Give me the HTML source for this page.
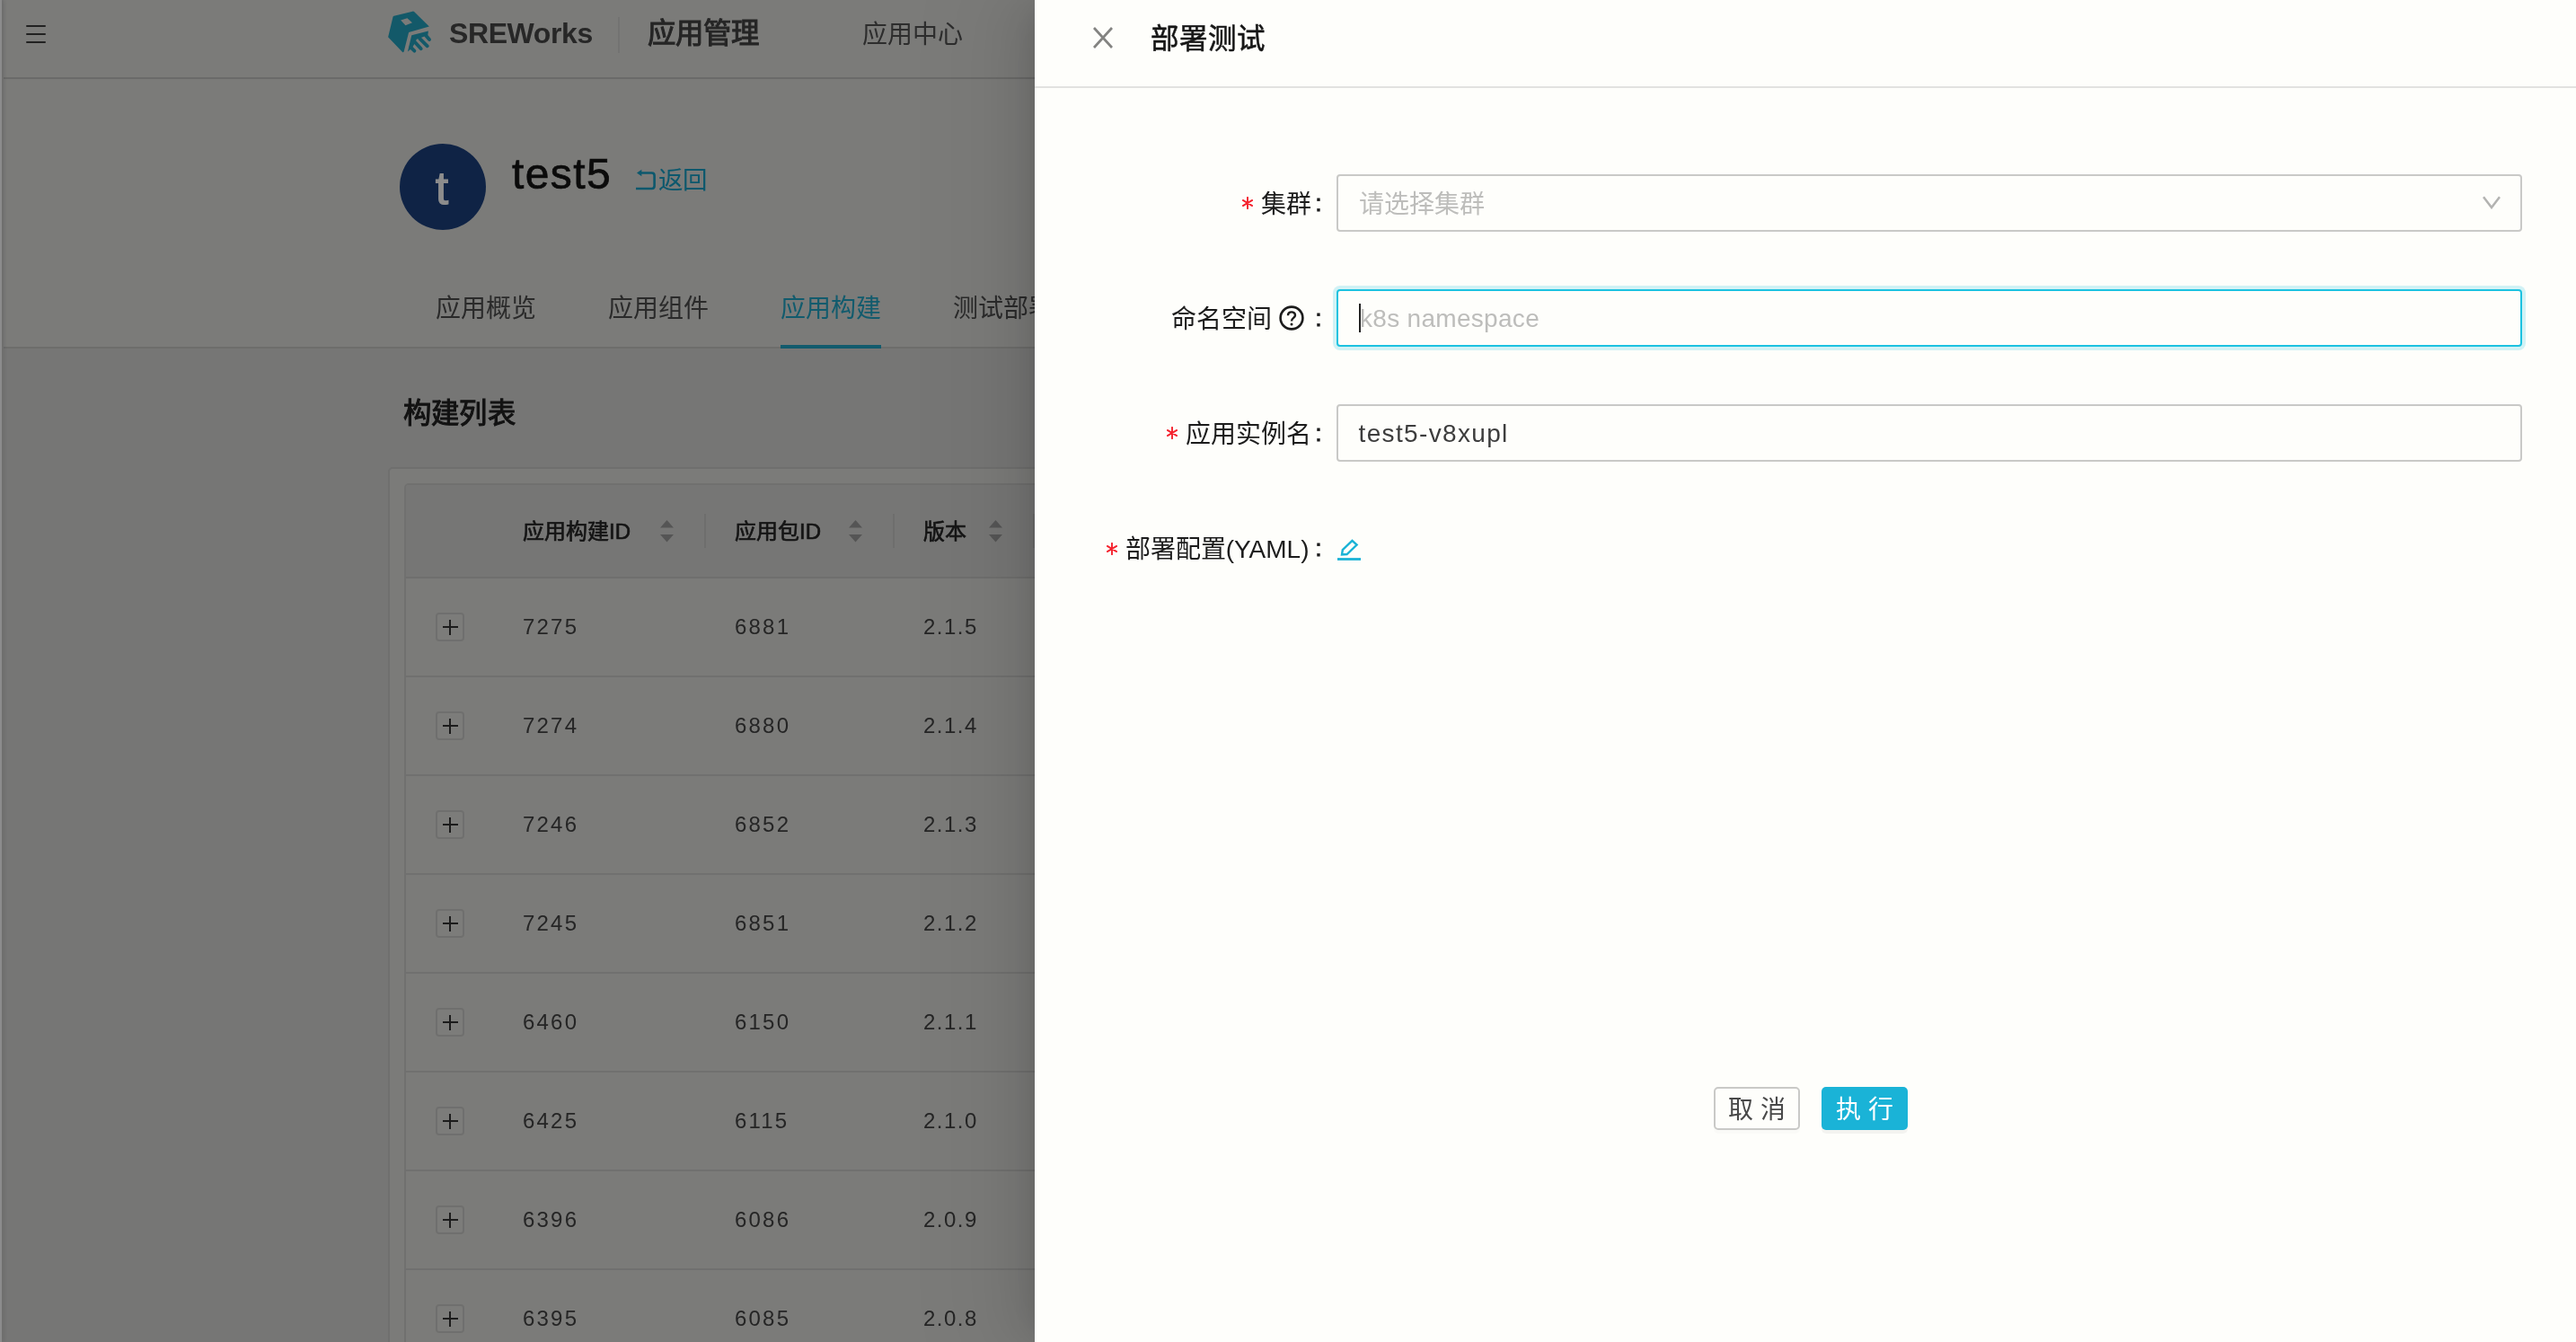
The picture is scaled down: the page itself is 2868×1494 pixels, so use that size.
<!DOCTYPE html>
<html lang="zh-CN">
<head>
<meta charset="utf-8">
<title>SREWorks</title>
<style>
html,body{margin:0;padding:0}
body{width:2868px;height:1494px;overflow:hidden;position:relative;background:#d9d9d7;font-family:"Liberation Sans",sans-serif;color:#222;}
div,span,svg{position:absolute;box-sizing:border-box;white-space:nowrap}
.t{line-height:1;}
/* ---------- underlying page ---------- */
#page{will-change:transform;left:0;top:0;width:2868px;height:1494px;background:#d7d7d6;overflow:hidden}
#strip{left:0;top:0;width:2px;height:1494px;background:#fff;box-shadow:2px 0 4px rgba(0,0,0,.18)}
#hdr{left:4px;top:0;width:2864px;height:88px;background:#e0e0dd;border-bottom:2px solid #c2c2c0;box-shadow:0 -2px 3px rgba(0,0,0,.0)}
#ttl{left:4px;top:88px;width:2864px;height:300px;background:#e0e0dd;border-bottom:2px solid #c6c6c4}
.ham{left:29px;width:22px;height:2.4px;background:#3c3c3c;border-radius:1px}
#brand{left:500px;top:21px;font-size:32px;font-weight:700;color:#484848;letter-spacing:-.4px}
#vdiv{left:688px;top:19px;width:2px;height:40px;background:#d2d2d0}
#appm{left:720.5px;top:21.5px;font-size:31.4px;letter-spacing:.3px;color:#444;-webkit-text-stroke:1.1px #444}
#appc{left:960px;top:25px;font-size:28px;color:#525252}
#ava{left:445px;top:160px;width:96px;height:96px;border-radius:50%;background:#1c417f}
#avat{left:444px;top:160px;width:96px;height:96px;text-align:center;font-size:52px;line-height:98px;color:#fff;-webkit-text-stroke:1.2px #fff}
#name{left:570px;top:170px;font-size:48px;color:#141414;letter-spacing:1.4px;-webkit-text-stroke:.7px #141414}
#back{left:733px;top:187px;font-size:27.5px;color:#17a0c6}
.tab{top:330px;font-size:28px;color:#4e4e4e}
#ink{left:869px;top:384px;width:112px;height:4px;background:#22a7c6}
#ltitle{left:448.5px;top:444.5px;font-size:31.4px;letter-spacing:.45px;color:#222;-webkit-text-stroke:1.05px #222}
#card{left:432px;top:520px;width:2200px;height:1200px;background:#e0e0dd;border:2px solid #cacac8;border-radius:5px}
#tbl{left:450px;top:538px;width:2200px;height:1200px;background:#e0e0dd;border:2px solid #cdcdca;border-radius:5px;overflow:hidden}
#thead{left:0;top:0;width:2200px;height:104px;background:#d8d8d6;border-bottom:2px solid #cbcbc8}
.th{top:40px;font-size:24px;color:#262626;-webkit-text-stroke:.65px #262626}
.cdiv{top:32px;width:2px;height:38px;background:#c8c8c6}
.sort{top:39.3px;width:16px;height:26px}
.row{left:0;width:2200px;height:110px;border-bottom:2px solid #cdcdca}
.exp{left:33px;top:38px;width:32px;height:32px;border:2px solid #cbcbc8;border-radius:4px;background:#e2e2df}
.exp:before{content:"";position:absolute;left:5.5px;top:13px;width:17px;height:2px;background:#333}
.exp:after{content:"";position:absolute;left:13px;top:5.5px;width:2px;height:17px;background:#333}
.td{top:42px;font-size:24px;color:#444;letter-spacing:2.2px}
.c1{left:130px}.c2{left:366px}.c3{left:576px;letter-spacing:1.5px}
/* ---------- mask + drawer ---------- */
#mask{left:0;top:0;width:2868px;height:1494px;background:rgba(0,0,0,.45)}
#drawer{will-change:transform;left:1152px;top:0;width:1716px;height:1494px;background:#fefefb;box-shadow:-12px 0 32px -16px rgba(0,0,0,.13),-18px 0 56px 0 rgba(0,0,0,.08),-24px 0 96px 32px rgba(0,0,0,.05)}
#dinner{left:0;top:0;width:1716px;height:1494px}
#dhead{left:0;top:0;width:1716px;height:98px;border-bottom:2px solid #e2e2e0}
#dtitle{left:129px;top:27.5px;font-size:31.5px;color:#161616;-webkit-text-stroke:.55px #161616}
.lab{right:1408px;font-size:28px;color:#1c1c1c;text-align:right}
.ast{width:12px;height:14px}
.col{left:312.5px;font-size:25px;color:#1c1c1c;-webkit-text-stroke:.9px #1c1c1c}
.req{color:#f5424f;font-size:28px;margin-right:8px;position:static;font-family:"Liberation Sans",sans-serif}
.colon{position:static;margin-left:6px}
.box{left:336px;width:1320px;height:64px;border:2px solid #c9c9c7;border-radius:4px;background:#fefefb}
.ph{left:22.5px;top:18px;font-size:28px;color:#bdbdbb}
.btn{top:1210px;width:96px;height:48px;border-radius:5px;font-size:28px;line-height:48px;text-align:center}
</style>
</head>
<body>
<div id="page">
  <div id="hdr"></div>
  <div id="ttl"></div>
  <div id="strip"></div>
  <div class="ham" style="top:28px"></div><div class="ham" style="top:37px"></div><div class="ham" style="top:46px"></div>
  <svg id="logo" style="left:420px;top:5px" width="80" height="65" viewBox="0 0 1652 1342">
    <path fill="#24a3bf" fill-rule="evenodd" d="M250,750 L362,285 Q368,268 385,264 L812,158 Q832,152 848,166 L1195,505 L725,640 L612,1085 Q600,1110 580,1095 Z M540,360 L690,315 L805,420 L650,480 Z"/>
    <path fill="#24a3bf" d="M790,705 L1175,608 L1165,695 L1060,745 L905,800 L845,925 L800,1000 L700,1085 Z"/>
    <g stroke="#24a3bf" stroke-width="80" stroke-linecap="round" fill="none">
      <path d="M1110,700 L1198,806"/><path d="M975,780 L1152,955"/><path d="M860,860 L1006,1016"/><path d="M770,985 L855,1068"/>
    </g>
  </svg>
  <div id="brand" class="t">SREWorks</div>
  <div id="vdiv"></div>
  <div id="appm" class="t">应用管理</div>
  <div id="appc" class="t">应用中心</div>

  <div id="ava"></div><div id="avat">t</div>
  <div id="name" class="t">test5</div>
  <svg style="left:707px;top:186px" width="26" height="28" viewBox="0 0 26 28" fill="none" stroke="#17a0c6" stroke-width="2.6"><path d="M7,6.5 H18.6 Q21.6,6.5 21.6,9.5 V21 Q21.6,24 18.6,24 H1"/><path d="M2,6.5 L7.4,2.8 V10.2 Z" fill="#17a0c6" stroke="none"/></svg>
  <div id="back" class="t">返回</div>
  <div class="tab t" style="left:485px">应用概览</div>
  <div class="tab t" style="left:677px">应用组件</div>
  <div class="tab t" style="left:869px;color:#22a7c6">应用构建</div>
  <div class="tab t" style="left:1061px">测试部署</div>
  <div id="ink"></div>

  <div id="ltitle" class="t">构建列表</div>
  <div id="card"></div>
  <div id="tbl">
    <div id="thead">
      <div class="th t" style="left:130px">应用构建ID</div>
      <svg class="sort" style="left:283px" viewBox="0 0 16 26"><path d="M7.5,0 L15,8.6 H0 Z M0,16 H15 L7.5,24.6 Z" fill="#9c9c9b"/></svg>
      <div class="cdiv" style="left:332px"></div>
      <div class="th t" style="left:366px">应用包ID</div>
      <svg class="sort" style="left:493px" viewBox="0 0 16 26"><path d="M7.5,0 L15,8.6 H0 Z M0,16 H15 L7.5,24.6 Z" fill="#9c9c9b"/></svg>
      <div class="cdiv" style="left:542px"></div>
      <div class="th t" style="left:576px">版本</div>
      <svg class="sort" style="left:649px" viewBox="0 0 16 26"><path d="M7.5,0 L15,8.6 H0 Z M0,16 H15 L7.5,24.6 Z" fill="#9c9c9b"/></svg>
      <div class="cdiv" style="left:698px"></div>
    </div>
    <div class="row" style="top:104px"><div class="exp"></div><div class="td t c1">7275</div><div class="td t c2">6881</div><div class="td t c3">2.1.5</div></div>
    <div class="row" style="top:214px"><div class="exp"></div><div class="td t c1">7274</div><div class="td t c2">6880</div><div class="td t c3">2.1.4</div></div>
    <div class="row" style="top:324px"><div class="exp"></div><div class="td t c1">7246</div><div class="td t c2">6852</div><div class="td t c3">2.1.3</div></div>
    <div class="row" style="top:434px"><div class="exp"></div><div class="td t c1">7245</div><div class="td t c2">6851</div><div class="td t c3">2.1.2</div></div>
    <div class="row" style="top:544px"><div class="exp"></div><div class="td t c1">6460</div><div class="td t c2">6150</div><div class="td t c3">2.1.1</div></div>
    <div class="row" style="top:654px"><div class="exp"></div><div class="td t c1">6425</div><div class="td t c2">6115</div><div class="td t c3">2.1.0</div></div>
    <div class="row" style="top:764px"><div class="exp"></div><div class="td t c1">6396</div><div class="td t c2">6086</div><div class="td t c3">2.0.9</div></div>
    <div class="row" style="top:874px"><div class="exp"></div><div class="td t c1">6395</div><div class="td t c2">6085</div><div class="td t c3">2.0.8</div></div>
  </div>
</div>

<div id="mask"></div>

<div id="drawer"><div id="dinner">
  <div id="dhead">
    <svg style="left:65px;top:30px" width="22" height="24" viewBox="0 0 22 24" fill="none" stroke="#838381" stroke-width="2.7"><path d="M1,1 L21,23 M21,1 L1,23"/></svg>
    <div id="dtitle" class="t">部署测试</div>
  </div>

  <svg class="ast" style="left:231px;top:219px" viewBox="0 0 12 14" fill="none" stroke="#f5222d" stroke-width="1.9" stroke-linecap="round"><path d="M6,.8 V13.2 M.8,3.9 L11.2,10.1 M11.2,3.9 L.8,10.1"/></svg>
  <div class="lab t" style="top:214px">集群</div><div class="col t" style="top:213.5px">:</div>
  <div class="box" style="top:194px"><div class="ph t">请选择集群</div>
    <svg style="left:1274px;top:21.5px" width="20" height="15" viewBox="0 0 20 15" fill="none" stroke="#b3b3b1" stroke-width="2.5"><path d="M1,1.2 L10,13 L19,1.2"/></svg>
  </div>

  <div class="lab t" style="top:342px;right:1452px">命名空间</div><div class="col t" style="top:341.5px">:</div>
  <svg style="left:272px;top:340px" width="28" height="28" viewBox="0 0 28 28" fill="none" stroke="#1c1c1c" stroke-width="2.6"><circle cx="14" cy="14" r="12.4"/><path d="M10,11.2 C10,6.2 18,6.2 18,11 C18,13.8 14,14 14,17.4" stroke-width="2.4"/><circle cx="14" cy="21" r="1.5" fill="#1c1c1c" stroke="none"/></svg>
  <div class="box" style="top:322px;border-color:#1cc2e0;box-shadow:0 0 0 4px rgba(28,194,224,.2)"><div class="ph t" style="left:24px;top:17px;letter-spacing:.3px">k8s namespace</div>
    <div style="left:23px;top:14px;width:2px;height:32px;background:#222"></div>
  </div>

  <svg class="ast" style="left:147px;top:475px" viewBox="0 0 12 14" fill="none" stroke="#f5222d" stroke-width="1.9" stroke-linecap="round"><path d="M6,.8 V13.2 M.8,3.9 L11.2,10.1 M11.2,3.9 L.8,10.1"/></svg>
  <div class="lab t" style="top:470px">应用实例名</div><div class="col t" style="top:469.5px">:</div>
  <div class="box" style="top:450px"><div class="ph t" style="top:16.5px;color:#3d3d3d;letter-spacing:1.35px">test5-v8xupl</div></div>

  <svg class="ast" style="left:80px;top:604px" viewBox="0 0 12 14" fill="none" stroke="#f5222d" stroke-width="1.9" stroke-linecap="round"><path d="M6,.8 V13.2 M.8,3.9 L11.2,10.1 M11.2,3.9 L.8,10.1"/></svg>
  <div class="lab t" style="top:598px;right:1410.5px">部署配置(YAML)</div><div class="col t" style="top:597.5px">:</div>
  <svg style="left:336px;top:600px" width="28" height="26" viewBox="0 0 28 26" fill="none" stroke="#1bb3d6" stroke-width="2.4"><path d="M1,22.5 H27" stroke-width="2.8"/><path d="M6,17.5 L6.8,12.2 L17.5,1.8 L22.6,6.6 L11.6,17 Z" stroke-linejoin="miter"/></svg>

  <div class="btn" style="left:756px;border:2px solid #c9c9c7;color:#484848;background:#fefefb;box-shadow:0 4px 0 rgba(0,0,0,.016)">取 消</div>
  <div class="btn" style="left:876px;background:#1ab3d7;color:#fff;line-height:52px;box-shadow:0 4px 0 rgba(0,0,0,.045)">执 行</div>
</div></div>
</body>
</html>
